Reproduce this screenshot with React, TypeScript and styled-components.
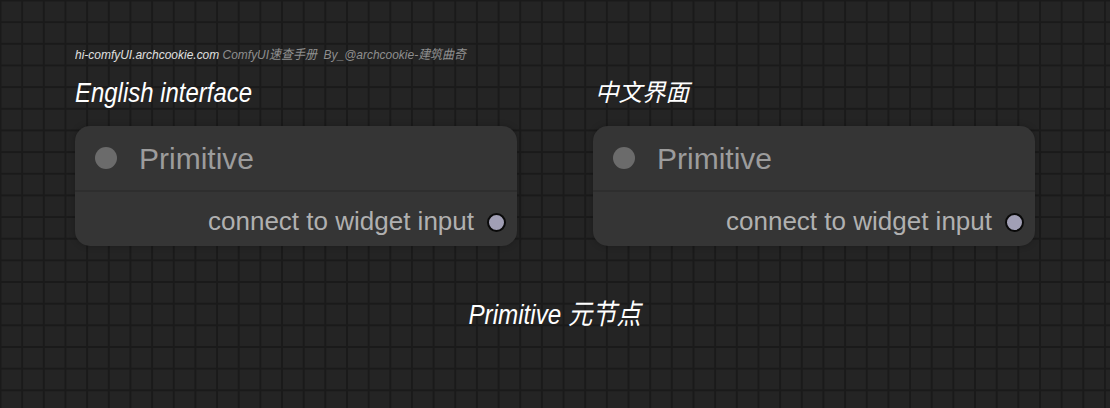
import React from "react";
import styled, { createGlobalStyle } from "styled-components";

const Global = createGlobalStyle`
  html, body { margin: 0; padding: 0; background: #232323; }
  #root { width: 1110px; height: 408px; }
`;

const Canvas = styled.div`
  width: 1110px;
  height: 408px;
  box-sizing: border-box;
  background-color: #242424;
  background-image:
    linear-gradient(to right, #1a1a1a 0, #1a1a1a 1.5px, transparent 1.5px),
    linear-gradient(to bottom, #1a1a1a 0, #1a1a1a 1.5px, transparent 1.5px);
  background-size: 21.67px 21.67px;
  background-position: -0.5px -0.5px;
  padding: 46px 0 0 75px;
  display: flex;
  flex-direction: column;
  align-items: flex-start;
  overflow: hidden;
`;

const Credit = styled.div`
  font-family: "Liberation Sans", "Noto Sans CJK SC", sans-serif;
  font-style: italic;
  font-size: 13px;
  line-height: 18px;
  color: #8f8f8f;
  white-space: nowrap;
  transform: scaleX(0.92);
  transform-origin: left center;
`;

const CreditSite = styled.span`
  color: #e0e0e0;
`;

const Columns = styled.div`
  display: flex;
  gap: 76px;
  margin-top: 12px;
`;

const Section = styled.section`
  display: flex;
  flex-direction: column;
  align-items: flex-start;
  width: 442px;
`;

const Heading = styled.h2<{ $cjk?: boolean }>`
  margin: 0 0 0 ${(p) => (p.$cjk ? "2px" : "0")};
  font-family: "Liberation Sans", "Noto Sans CJK SC", sans-serif;
  font-style: italic;
  font-weight: 400;
  font-size: ${(p) => (p.$cjk ? "24px" : "28px")};
  line-height: 34px;
  color: #ffffff;
  white-space: nowrap;
  transform: scaleX(${(p) => (p.$cjk ? 0.98 : 0.855)});
  transform-origin: left center;
`;

const Node = styled.div`
  align-self: stretch;
  margin-top: 16px;
  height: 120px;
  border-radius: 15px;
  background: #353535;
  box-shadow: 0 0 6px rgba(0, 0, 0, 0.25);
  display: flex;
  flex-direction: column;
  overflow: hidden;
  font-family: "Liberation Sans", Arial, sans-serif;
`;

const TitleBar = styled.div`
  height: 66px;
  flex: none;
  display: flex;
  align-items: center;
  padding-left: 20px;
  gap: 22px;
  border-bottom: 2px solid #2e2e2e;
  box-sizing: border-box;
`;

const TitleDot = styled.span`
  width: 22px;
  height: 22px;
  border-radius: 50%;
  background: #6b6b6b;
  flex: none;
`;

const Title = styled.span`
  font-size: 30px;
  color: #9c9c9c;
  line-height: 1;
  padding-top: 1px;
`;

const Body = styled.div`
  flex: 1;
  display: flex;
  align-items: center;
  justify-content: flex-end;
  padding: 6px 11px 0 0;
  gap: 13px;
`;

const OutputLabel = styled.span`
  font-size: 26px;
  color: #b0b0b0;
  line-height: 1;
  margin-top: -2px;
`;

const OutputSlot = styled.span`
  width: 15px;
  height: 15px;
  border-radius: 50%;
  background: #a19fb5;
  border: 2px solid #0a0a0a;
  flex: none;
`;

const Caption = styled.div`
  align-self: center;
  margin: 52px 0 0 -75px;
  font-family: "Liberation Sans", "Noto Sans CJK SC", sans-serif;
  font-style: italic;
  font-size: 28px;
  line-height: 34px;
  color: #ffffff;
  white-space: nowrap;
  transform: scaleX(0.865);
  transform-origin: center center;
`;

function PrimitiveNode() {
  return (
    <Node>
      <TitleBar>
        <TitleDot />
        <Title>Primitive</Title>
      </TitleBar>
      <Body>
        <OutputLabel>connect to widget input</OutputLabel>
        <OutputSlot />
      </Body>
    </Node>
  );
}

export default function App() {
  return (
    <>
      <Global />
      <Canvas>
        <Credit>
          <CreditSite>hi-comfyUI.archcookie.com</CreditSite> ComfyUI速查手册&nbsp; By_@archcookie-建筑曲奇
        </Credit>
        <Columns>
          <Section>
            <Heading>English interface</Heading>
            <PrimitiveNode />
          </Section>
          <Section>
            <Heading $cjk>中文界面</Heading>
            <PrimitiveNode />
          </Section>
        </Columns>
        <Caption>Primitive 元节点</Caption>
      </Canvas>
    </>
  );
}
